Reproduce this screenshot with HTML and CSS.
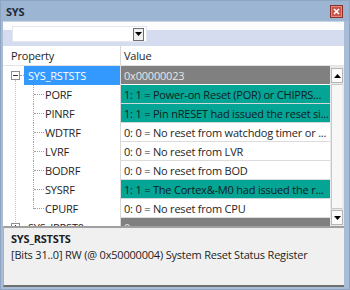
FILE: index.html
```html
<!DOCTYPE html>
<html>
<head>
<meta charset="utf-8">
<link rel="stylesheet" href="styles.css">
</head>
<body>
<div class="window">
  <div class="titlebar">
    <span class="title">SYS</span>
    <span class="close"><svg width="7" height="7" viewBox="0 0 7 7"><path d="M1 1 L6 6 M6 1 L1 6" stroke="#fff" stroke-width="1.6"/></svg></span>
  </div>
  <div class="client">
    <div class="toolbar">
      <div class="combo">
        <div class="combo-field"></div>
        <div class="combo-btn"><svg width="7" height="4" viewBox="0 0 7 4"><path d="M0 0 H7 L3.5 4 Z" fill="#000"/></svg></div>
      </div>
    </div>
    <div class="header">
      <div class="h-name">Property</div>
      <div class="h-value">Value</div>
    </div>
    <div class="body">
      <div class="rows">
        <div class="row">
          <div class="name parent first"><span class="box"><svg width="9" height="9" viewBox="0 0 9 9"><rect x="0.5" y="0.5" width="8" height="8" fill="#fff" stroke="#8e8f8f"/><path d="M2 4.5 H7" stroke="#333"/></svg></span><span class="label sel">SYS_RSTSTS</span></div>
          <div class="value gray">0x00000023</div>
        </div>
        <div class="row">
          <div class="name child">PORF</div>
          <div class="value teal">1: 1 = Power-on Reset (POR) or CHIPRS...</div>
        </div>
        <div class="row">
          <div class="name child">PINRF</div>
          <div class="value teal">1: 1 = Pin nRESET had issued the reset si...</div>
        </div>
        <div class="row">
          <div class="name child">WDTRF</div>
          <div class="value">0: 0 = No reset from watchdog timer or ...</div>
        </div>
        <div class="row">
          <div class="name child">LVRF</div>
          <div class="value">0: 0 = No reset from LVR</div>
        </div>
        <div class="row">
          <div class="name child">BODRF</div>
          <div class="value">0: 0 = No reset from BOD</div>
        </div>
        <div class="row">
          <div class="name child">SYSRF</div>
          <div class="value teal">1: 1 = The Cortex&amp;-M0 had issued the r...</div>
        </div>
        <div class="row">
          <div class="name child last">CPURF</div>
          <div class="value">0: 0 = No reset from CPU</div>
        </div>
        <div class="row">
          <div class="name parent"><span class="box"><svg width="9" height="9" viewBox="0 0 9 9"><rect x="0.5" y="0.5" width="8" height="8" fill="#fff" stroke="#8e8f8f"/><path d="M2 4.5 H7 M4.5 2 V7" stroke="#333"/></svg></span><span class="label">SYS_IPRST0</span></div>
          <div class="value gray">0</div>
        </div>
      </div>
      <div class="scrollbar">
        <div class="sb-btn"><svg width="7" height="4" viewBox="0 0 7 4"><path d="M0 4 H7 L3.5 0 Z" fill="#000"/></svg></div>
        <div class="sb-track"><div class="sb-thumb"></div></div>
        <div class="sb-btn"><svg width="7" height="4" viewBox="0 0 7 4"><path d="M0 0 H7 L3.5 4 Z" fill="#000"/></svg></div>
      </div>
    </div>
    <div class="desc">
      <div class="desc-title">SYS_RSTSTS</div>
      <div class="desc-text">[Bits 31..0] RW (@ 0x50000004) System Reset Status Register</div>
    </div>
  </div>
</div>
</body>
</html>
```
FILE: styles.css
```css
* { box-sizing: border-box; }
html, body { margin: 0; padding: 0; }
body {
  font-family: "Open Sans", "Noto Sans", sans-serif;
  font-size: 11px;
  letter-spacing: -0.2px;
  color: #1e1e1e;
  background: #fff;
}
.window {
  width: 350px;
  height: 290px;
  background: #a8bcd5;
  display: flex;
  flex-direction: column;
  border: 1px solid #8ea4c0;
}
.titlebar {
  height: 20px;
  background: #9cb5d3;
  display: flex;
  align-items: center;
  justify-content: space-between;
  padding: 0 6px 0 5px;
  flex: none;
}
.title {
  font-weight: bold;
  color: #1d2a3a;
  font-size: 11px;
}
.close {
  width: 13px;
  height: 13px;
  background: #c9564a;
  border: 1px solid #8c2f27;
  display: flex;
  align-items: center;
  justify-content: center;
  box-shadow: inset 0 0 0 1px #e08a80;
}
.client {
  flex: 1;
  margin: 0 5px 2px 2px;
  display: flex;
  flex-direction: column;
  background: #fff;
  border-top: 1px solid #c9d6e6;
}
.toolbar {
  height: 24px;
  flex: none;
  background: linear-gradient(#fdfdfe 0, #fdfdfe 35%, #d6dcef 35%, #d6dcef 100%);
  padding: 4px 0 0 9px;
  display: flex;
  align-items: flex-start;
}
.combo {
  display: flex;
  width: 135px;
  height: 16px;
  background: #fff;
  border: 1px solid #e3e6ee;
  justify-content: flex-end;
  align-items: center;
  padding-right: 2px;
}
.combo-btn {
  width: 11px;
  height: 13px;
  border: 1px solid #6e6e6e;
  background: #f0f0f0;
  display: flex;
  align-items: center;
  justify-content: center;
}
.header {
  height: 20px;
  flex: none;
  display: flex;
  background: #fff;
  border-bottom: 1px solid #e3e3e3;
}
.h-name {
  width: 118px;
  padding: 2px 0 0 8px;
  border-right: 1px solid #d8d8d8;
}
.h-value {
  padding: 2px 0 0 3px;
}
.body {
  height: 160px;
  flex: none;
  display: flex;
  overflow: hidden;
}
.rows {
  flex: 1;
  overflow: hidden;
}
.row {
  display: flex;
  height: 19px;
}
.name {
  width: 118px;
  flex: none;
  position: relative;
  border-right: 1px solid #d8d8d8;
  white-space: nowrap;
}
.name.parent {
  display: flex;
  align-items: stretch;
  padding-left: 8px;
}
.box {
  display: flex;
  align-items: center;
  width: 13px;
}
.box::after {
  content: "";
  width: 4px;
  border-top: 1px dotted #a0a0a0;
}
.label {
  padding: 2px 4px 0 4px;
  flex: 1;
}
.label.sel {
  background: #3399ff;
  color: #fff;
  height: 19px;
}
.name.child {
  padding: 2px 0 0 42px;
}
.name.child::before {
  content: "";
  position: absolute;
  left: 30px;
  top: 0;
  bottom: 0;
  border-left: 1px dotted #a0a0a0;
}
.name.child.last::before { bottom: 9px; }
.name.child::after {
  content: "";
  position: absolute;
  left: 31px;
  width: 10px;
  top: 9px;
  border-top: 1px dotted #a0a0a0;
}
.name.first::before {
  content: "";
  position: absolute;
  left: 12px;
  top: 14px;
  height: 160px;
  border-left: 1px dotted #c8c8c8;
}
.value {
  flex: 1;
  padding: 2px 0 0 3px;
  border-bottom: 1px solid #dcdcdc;
  white-space: nowrap;
  overflow: hidden;
}
.value.gray {
  background: #808080;
  color: #e6e6e6;
  border-bottom-color: #fff;
}
.value.teal {
  background: #04a595;
  color: #10201e;
  border-bottom-color: #cfd8d6;
}
.scrollbar {
  width: 14px;
  flex: none;
  display: flex;
  flex-direction: column;
  background: #e9e9e9;
  padding: 2px 1px 1px 1px;
}
.sb-btn {
  height: 15px;
  flex: none;
  background: #fbfbfb;
  border: 1px solid #b5b5b5;
  display: flex;
  align-items: center;
  justify-content: center;
}
.sb-track {
  flex: 1;
  padding: 1px 0;
  display: flex;
}
.sb-thumb {
  flex: 1;
  background: #f7f7f7;
  border: 1px solid #c8c8c8;
  border-right-color: #ececec;
}
.desc {
  flex: 1;
  background: #f0f0f0;
  border-top: 2px solid #a0a0a0;
  border-bottom: 2px solid #6f6f6f;
  border-left: 1px solid #b0b0b0;
  padding: 3px 0 0 7px;
}
.desc-title {
  font-weight: bold;
  line-height: 16px;
  color: #1e1e1e;
}
.desc-text {
  line-height: 16px;
  color: #1e1e1e;
}
```
